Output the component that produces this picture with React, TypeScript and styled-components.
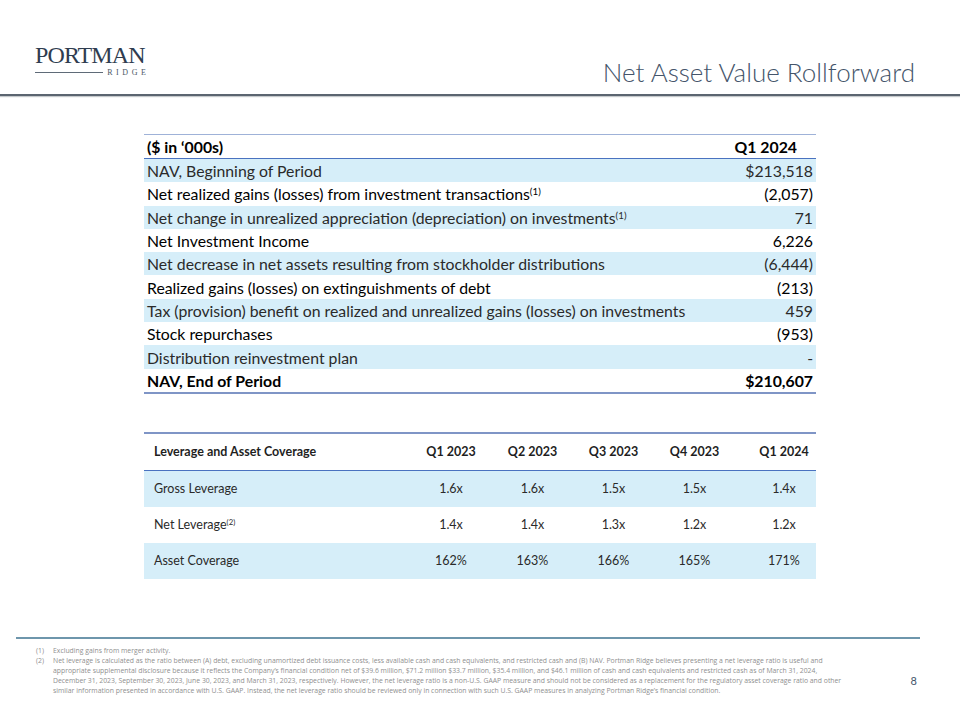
import React from 'react';
import styled, { createGlobalStyle } from 'styled-components';

const GlobalStyle = createGlobalStyle`
  html, body {
    margin: 0;
    padding: 0;
    background: #ffffff;
  }
  body {
    font-family: Lato, "Open Sans", sans-serif;
  }
`;

const Slide = styled.div`
  width: 960px;
  height: 720px;
  display: flex;
  flex-direction: column;
  background: #ffffff;
  overflow: hidden;
`;

const Header = styled.header`
  height: 94px;
  border-bottom: 2px solid #5b6570;
  box-shadow: 0 1px 1px rgba(90, 100, 110, 0.35);
  display: flex;
  justify-content: space-between;
  align-items: flex-end;
  padding: 0 45px 0 35px;
`;

const Logo = styled.div`
  align-self: flex-start;
  margin-top: 43px;
  display: flex;
  flex-direction: column;
  width: 111px;
`;

const LogoWord = styled.div`
  font-family: "Liberation Serif", "DejaVu Serif", serif;
  font-size: 24px;
  line-height: 24px;
  color: #2f3d50;
  letter-spacing: -0.9px;
  white-space: nowrap;
`;

const LogoSub = styled.div`
  display: flex;
  align-items: center;
  gap: 4px;
  margin-top: 1px;
`;

const LogoRule = styled.span`
  flex: 1;
  height: 1px;
  background: #5f6b78;
`;

const LogoSmall = styled.span`
  font-family: "Liberation Serif", serif;
  font-size: 8px;
  letter-spacing: 3.6px;
  margin-right: -3.6px;
  color: #4c5866;
`;

const Title = styled.h1`
  margin: 0 0 6px;
  font-family: Lato, "Open Sans", sans-serif;
  font-weight: 300;
  font-size: 26px;
  color: #44546a;
`;

const Body = styled.main`
  flex: 1;
  display: flex;
  flex-direction: column;
  padding-left: 144px;
`;

const RollTable = styled.div`
  margin-top: 38px;
  width: 672px;
  border-top: 1px solid #9fb2d8;
  border-bottom: 2px solid #7f95c6;
`;

const RollRow = styled.div<{ $shade?: boolean; $bold?: boolean; $head?: boolean }>`
  display: flex;
  justify-content: space-between;
  align-items: center;
  height: ${({ $head }) => ($head ? '23px' : '23.3px')};
  padding: 0 3px;
  font-size: 15.8px;
  font-weight: ${({ $bold }) => ($bold ? 700 : 400)};
  color: ${({ $shade }) => ($shade ? '#2a2a2a' : '#000000')};
  background: ${({ $shade }) => ($shade ? '#d6eef9' : '#ffffff')};
  border-bottom: ${({ $head }) => ($head ? '1px solid #4a72c0' : 'none')};
  white-space: nowrap;
`;

const HeadValue = styled.span`
  padding-right: 16px;
`;

const Sup = styled.sup`
  font-size: 0.62em;
  line-height: 0;
  vertical-align: 0.55em;
`;

const LevTable = styled.div`
  margin-top: 38px;
  width: 672px;
  border-top: 2px solid #7f95c6;
`;

const LevRow = styled.div<{ $shade?: boolean; $head?: boolean }>`
  display: grid;
  grid-template-columns: 266px 82px 81px 81px 81px 1fr;
  align-items: center;
  height: 36px;
  font-size: 12.5px;
  font-weight: ${({ $head }) => ($head ? 700 : 400)};
  color: ${({ $head }) => ($head ? '#1f1f1f' : '#2a2a2a')};
  background: ${({ $shade }) => ($shade ? '#d6eef9' : '#ffffff')};
  border-bottom: ${({ $head }) => ($head ? '1px solid #4a72c0' : 'none')};
`;

const LevLabel = styled.span`
  padding-left: 10px;
`;

const LevCell = styled.span<{ $last?: boolean }>`
  text-align: center;
  padding-left: ${({ $last }) => ($last ? '17px' : '0')};
`;

const Footer = styled.footer`
  margin: 0 40px 0 16px;
  border-top: 2px solid #6e96ac;
  padding: 7px 0 0 20px;
  height: 74px;
  display: flex;
  align-items: flex-start;
  justify-content: space-between;
`;

const Notes = styled.div`
  display: flex;
  flex-direction: column;
  font-family: "Open Sans", Lato, sans-serif;
  font-size: 6.85px;
  line-height: 10px;
  color: #8f8f8f;
`;

const Note = styled.div`
  display: grid;
  grid-template-columns: 17px auto;
  white-space: nowrap;
`;

const PageNum = styled.div`
  margin-top: 28px;
  margin-right: 3px;
  font-size: 11px;
  color: #44546a;
`;

const rollRows: { label: string; value: string; sup?: boolean; bold?: boolean }[] = [
  { label: 'NAV, Beginning of Period', value: '$213,518' },
  { label: 'Net realized gains (losses) from investment transactions', value: '(2,057)', sup: true },
  { label: 'Net change in unrealized appreciation (depreciation) on investments', value: '71', sup: true },
  { label: 'Net Investment Income', value: '6,226' },
  { label: 'Net decrease in net assets resulting from stockholder distributions', value: '(6,444)' },
  { label: 'Realized gains (losses) on extinguishments of debt', value: '(213)' },
  { label: 'Tax (provision) benefit on realized and unrealized gains (losses) on investments', value: '459' },
  { label: 'Stock repurchases', value: '(953)' },
  { label: 'Distribution reinvestment plan', value: '-' },
  { label: 'NAV, End of Period', value: '$210,607', bold: true },
];

const quarters = ['Q1 2023', 'Q2 2023', 'Q3 2023', 'Q4 2023', 'Q1 2024'];

const levRows: { label: string; values: string[]; sup?: string }[] = [
  { label: 'Gross Leverage', values: ['1.6x', '1.6x', '1.5x', '1.5x', '1.4x'] },
  { label: 'Net Leverage', values: ['1.4x', '1.4x', '1.3x', '1.2x', '1.2x'], sup: '(2)' },
  { label: 'Asset Coverage', values: ['162%', '163%', '166%', '165%', '171%'] },
];

const App = () => (
  <>
    <GlobalStyle />
    <Slide>
      <Header>
        <Logo>
          <LogoWord>PORTMAN</LogoWord>
          <LogoSub>
            <LogoRule />
            <LogoSmall>RIDGE</LogoSmall>
          </LogoSub>
        </Logo>
        <Title>Net Asset Value Rollforward</Title>
      </Header>

      <Body>
        <RollTable>
          <RollRow $head $bold>
            <span>($ in ‘000s)</span>
            <HeadValue>Q1 2024</HeadValue>
          </RollRow>
          {rollRows.map((r, i) => (
            <RollRow key={r.label} $shade={i % 2 === 0} $bold={r.bold}>
              <span>
                {r.label}
                {r.sup && <Sup>(1)</Sup>}
              </span>
              <span>{r.value}</span>
            </RollRow>
          ))}
        </RollTable>

        <LevTable>
          <LevRow $head>
            <LevLabel>Leverage and Asset Coverage</LevLabel>
            {quarters.map((q, i) => (
              <LevCell key={q} $last={i === quarters.length - 1}>{q}</LevCell>
            ))}
          </LevRow>
          {levRows.map((r, i) => (
            <LevRow key={r.label} $shade={i % 2 === 0}>
              <LevLabel>
                {r.label}
                {r.sup && <Sup>{r.sup}</Sup>}
              </LevLabel>
              {r.values.map((v, j) => (
                <LevCell key={j} $last={j === r.values.length - 1}>{v}</LevCell>
              ))}
            </LevRow>
          ))}
        </LevTable>
      </Body>

      <Footer>
        <Notes>
          <Note>
            <span>(1)</span>
            <span>Excluding gains from merger activity.</span>
          </Note>
          <Note>
            <span>(2)</span>
            <span>
              Net leverage is calculated as the ratio between (A) debt, excluding unamortized debt issuance costs, less available cash and cash equivalents, and restricted cash and (B) NAV. Portman Ridge believes presenting a net leverage ratio is useful and
              <br />
              appropriate supplemental disclosure because it reflects the Company’s financial condition net of $39.6 million, $71.2 million $33.7 million, $35.4 million, and $46.1 million of cash and cash equivalents and restricted cash as of March 31, 2024,
              <br />
              December 31, 2023, September 30, 2023, June 30, 2023, and March 31, 2023, respectively. However, the net leverage ratio is a non-U.S. GAAP measure and should not be considered as a replacement for the regulatory asset coverage ratio and other
              <br />
              similar information presented in accordance with U.S. GAAP. Instead, the net leverage ratio should be reviewed only in connection with such U.S. GAAP measures in analyzing Portman Ridge’s financial condition.
            </span>
          </Note>
        </Notes>
        <PageNum>8</PageNum>
      </Footer>
    </Slide>
  </>
);

export default App;
